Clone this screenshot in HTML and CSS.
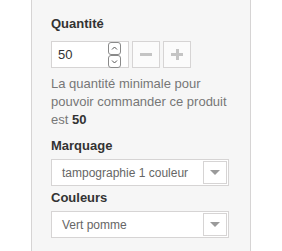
FILE: index.html
```html
<!DOCTYPE html>
<html lang="fr">
<head>
<meta charset="utf-8">
<link rel="stylesheet" href="styles.css">
</head>
<body>
<div class="panel">
  <div class="field">
    <div class="label">Quantité</div>
    <div class="qty-row">
      <div class="qty-box">
        <span class="qty-val">50</span>
        <svg class="spinner" width="14" height="26" viewBox="0 0 14 26">
          <rect x="0.5" y="0.5" width="12" height="12" rx="2.5" fill="#fff" stroke="#8a8a8a"/>
          <rect x="0.5" y="13.5" width="12" height="12" rx="2.5" fill="#fff" stroke="#8a8a8a"/>
          <path d="M4 7.5 L6.5 5 L9 7.5" fill="none" stroke="#555" stroke-width="1"/>
          <path d="M4 18.5 L6.5 21 L9 18.5" fill="none" stroke="#555" stroke-width="1"/>
        </svg>
      </div>
      <div class="btn"><span class="minus"></span></div>
      <div class="btn"><span class="plus"></span></div>
    </div>
    <p class="note">La quantité minimale pour pouvoir commander ce produit est <b>50</b></p>
  </div>
  <div class="field">
    <div class="label">Marquage</div>
    <div class="select"><span class="sel-text">tampographie 1 couleur</span><span class="arrow"><i></i></span></div>
  </div>
  <div class="field">
    <div class="label">Couleurs</div>
    <div class="select"><span class="sel-text">Vert pomme</span><span class="arrow"><i></i></span></div>
  </div>
</div>
</body>
</html>
```

FILE: styles.css
```css
html, body { margin: 0; padding: 0; background: #fff; }
body {
  font-family: "Liberation Sans", Arial, sans-serif;
  font-size: 13px;
  line-height: 18px;
  color: #777;
}
.panel {
  margin-left: 31px;
  width: 220px;
  height: 251px;
  box-sizing: border-box;
  background: #f6f6f6;
  border-left: 1px solid #d6d4d4;
  border-right: 1px solid #d6d4d4;
  padding: 15px 0 0 19px;
  overflow: hidden;
}
.label {
  font-weight: bold;
  color: #333;
}
.qty-row {
  display: flex;
  margin-top: 8px;
  gap: 3px;
}
.qty-box {
  width: 78px;
  height: 27px;
  box-sizing: border-box;
  border: 1px solid #d6d4d4;
  background: #fff;
  display: flex;
  align-items: center;
  justify-content: space-between;
  padding: 0 6px 0 6px;
}
.qty-val { color: #333; }
.spinner { display: block; }
.btn {
  width: 28px;
  height: 27px;
  box-sizing: border-box;
  border: 1px solid #d6d4d4;
  background: #fbfbfb;
  display: flex;
  align-items: center;
  justify-content: center;
}
.btn:first-of-type { margin-left: 1px; }
.minus {
  display: block;
  width: 12px;
  height: 3px;
  background: #c4c4c4;
}
.plus {
  display: block;
  width: 12px;
  height: 11px;
  background:
    linear-gradient(#c4c4c4, #c4c4c4) center / 12px 3px no-repeat,
    linear-gradient(#c4c4c4, #c4c4c4) center / 3px 11px no-repeat;
}
.note {
  margin: 7px 0 8px;
  width: 182px;
}
.note b { color: #333; }
.field + .field { margin-top: 3px; }
.select {
  margin-top: 4px;
  width: 178px;
  height: 27px;
  box-sizing: border-box;
  border: 1px solid #d6d4d4;
  background: #fff;
  display: flex;
  align-items: center;
  justify-content: space-between;
  padding: 0 1px 0 10px;
  color: #666;
  font-size: 12px;
}
.arrow {
  width: 24px;
  height: 23px;
  box-sizing: border-box;
  border: 1px solid #d6d4d4;
  display: flex;
  align-items: center;
  justify-content: center;
}
.arrow i {
  display: block;
  width: 0;
  height: 0;
  border-left: 5px solid transparent;
  border-right: 5px solid transparent;
  border-top: 5px solid #9a9a9a;
}
```
